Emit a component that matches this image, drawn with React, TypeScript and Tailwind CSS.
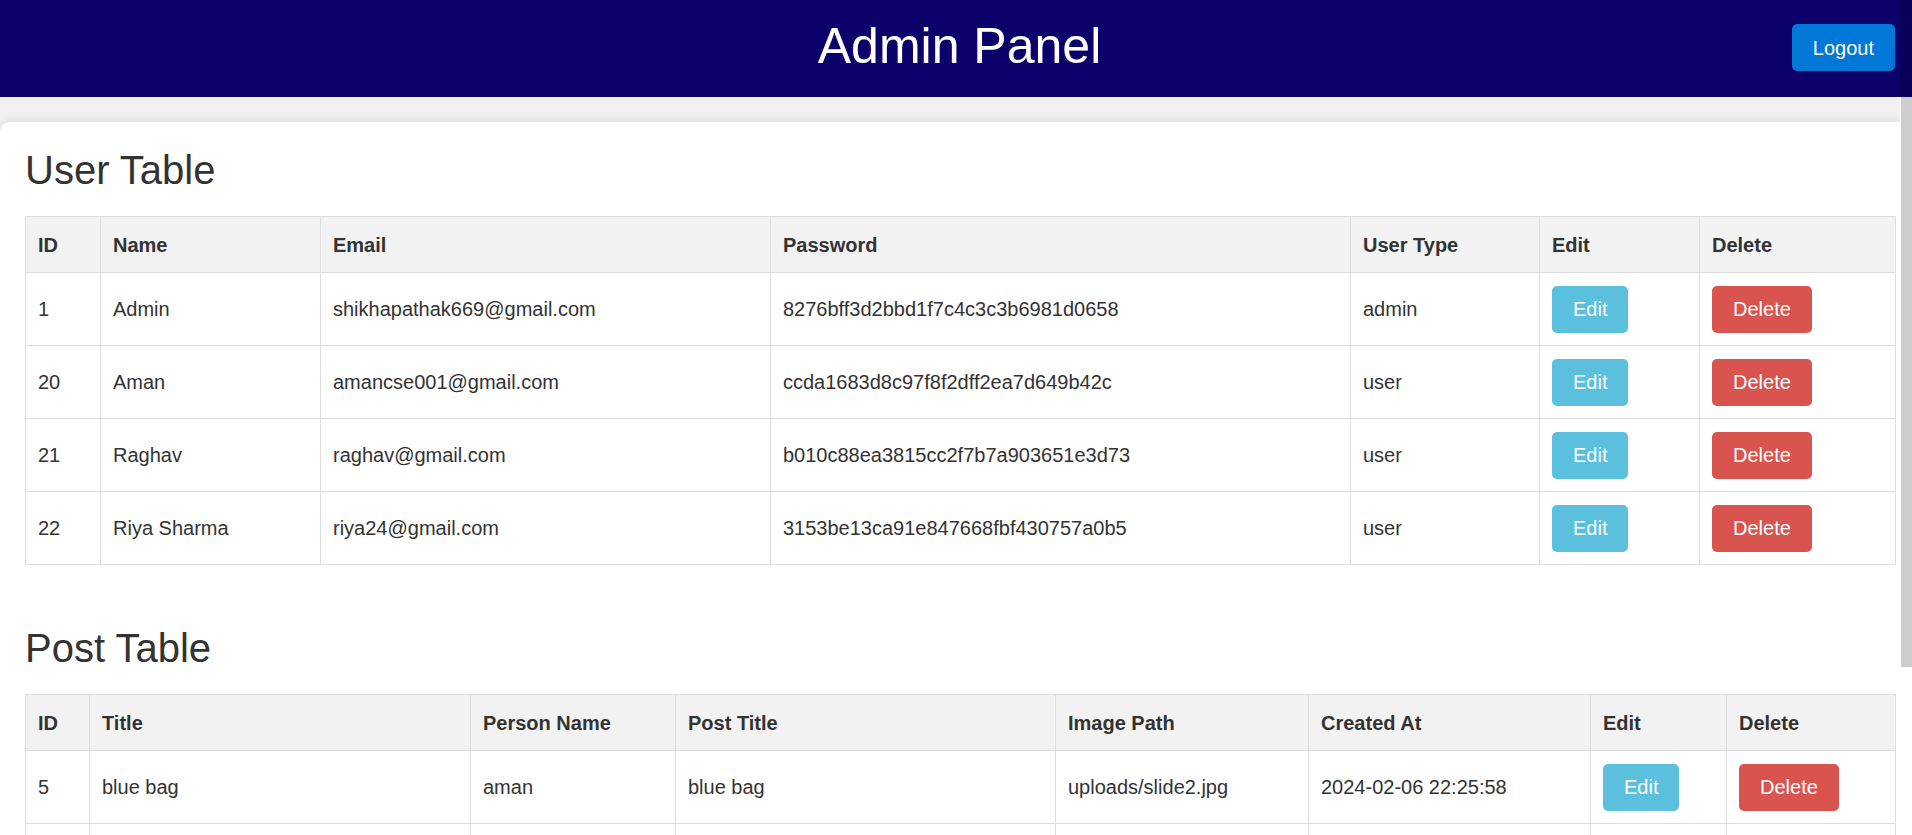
const users = [
  { id: 1, name: "Admin", email: "shikhapathak669@gmail.com", password: "8276bff3d2bbd1f7c4c3c3b6981d0658", type: "admin" },
  { id: 20, name: "Aman", email: "amancse001@gmail.com", password: "ccda1683d8c97f8f2dff2ea7d649b42c", type: "user" },
  { id: 21, name: "Raghav", email: "raghav@gmail.com", password: "b010c88ea3815cc2f7b7a903651e3d73", type: "user" },
  { id: 22, name: "Riya Sharma", email: "riya24@gmail.com", password: "3153be13ca91e847668fbf430757a0b5", type: "user" },
];

const posts = [
  { id: 5, title: "blue bag", person: "aman", postTitle: "blue bag", image: "uploads/slide2.jpg", created: "2024-02-06 22:25:58" },
];

const th = "h-[56px] border border-[#ddd] bg-[#f2f2f2] px-3 py-0 text-left font-bold";
const td = "h-[73px] border border-[#ddd] px-3 py-0";

function EditButton() {
  return (
    <button className="h-[47px] rounded-[5px] bg-[#5bc0de] px-[21px] text-[20px] text-white">
      Edit
    </button>
  );
}

function DeleteButton() {
  return (
    <button className="h-[47px] rounded-[5px] bg-[#d9534f] px-[21px] text-[20px] text-white">
      Delete
    </button>
  );
}

function Heading({ children, className = "" }: { children: string; className?: string }) {
  return (
    <h2 className={`h-[42px] text-[40px] leading-[42px] font-normal text-[#333] ${className}`}>
      {children}
    </h2>
  );
}

export default function App() {
  return (
    <div className="flex h-[835px] overflow-hidden bg-[#f1f1f1] font-['Liberation_Sans',Arial,sans-serif] text-[#333]">
      <div className="flex min-w-0 flex-1 flex-col">
        <header className="grid h-[97px] shrink-0 grid-cols-[1fr_auto_1fr] items-start bg-[#0c006b]">
          <div />
          <h1 className="pt-[21px] pl-[19px] text-[50px] leading-[50px] font-normal text-white">
            Admin Panel
          </h1>
          <div className="flex justify-end pt-[24px] pr-[5px]">
            <button className="h-[47px] rounded-[5px] bg-[#0078d7] px-[21px] text-[20px] text-white">
              Logout
            </button>
          </div>
        </header>

        <main className="mt-[25px] flex-1 rounded-tl-[10px] bg-white pt-[27px] pr-[5px] pl-[25px] shadow-[0_0_12px_rgba(0,0,0,0.12)]">
          <Heading className="mb-[25px]">User Table</Heading>
          <table className="w-[1870px] table-fixed border-collapse text-[20px]">
            <colgroup>
              <col className="w-[75px]" />
              <col className="w-[220px]" />
              <col className="w-[450px]" />
              <col className="w-[580px]" />
              <col className="w-[189px]" />
              <col className="w-[160px]" />
              <col className="w-[196px]" />
            </colgroup>
            <thead>
              <tr>
                <th className={th}>ID</th>
                <th className={th}>Name</th>
                <th className={th}>Email</th>
                <th className={th}>Password</th>
                <th className={th}>User Type</th>
                <th className={th}>Edit</th>
                <th className={th}>Delete</th>
              </tr>
            </thead>
            <tbody>
              {users.map((u) => (
                <tr key={u.id}>
                  <td className={td}>{u.id}</td>
                  <td className={td}>{u.name}</td>
                  <td className={td}>{u.email}</td>
                  <td className={td}>{u.password}</td>
                  <td className={td}>{u.type}</td>
                  <td className={td}>
                    <EditButton />
                  </td>
                  <td className={td}>
                    <DeleteButton />
                  </td>
                </tr>
              ))}
            </tbody>
          </table>

          <Heading className="mt-[62px] mb-[25px]">Post Table</Heading>
          <table className="w-[1870px] table-fixed border-collapse text-[20px]">
            <colgroup>
              <col className="w-[64px]" />
              <col className="w-[381px]" />
              <col className="w-[205px]" />
              <col className="w-[380px]" />
              <col className="w-[253px]" />
              <col className="w-[282px]" />
              <col className="w-[136px]" />
              <col className="w-[169px]" />
            </colgroup>
            <thead>
              <tr>
                <th className={th}>ID</th>
                <th className={th}>Title</th>
                <th className={th}>Person Name</th>
                <th className={th}>Post Title</th>
                <th className={th}>Image Path</th>
                <th className={th}>Created At</th>
                <th className={th}>Edit</th>
                <th className={th}>Delete</th>
              </tr>
            </thead>
            <tbody>
              {posts.map((p) => (
                <tr key={p.id}>
                  <td className={td}>{p.id}</td>
                  <td className={td}>{p.title}</td>
                  <td className={td}>{p.person}</td>
                  <td className={td}>{p.postTitle}</td>
                  <td className={td}>{p.image}</td>
                  <td className={td}>{p.created}</td>
                  <td className={td}>
                    <EditButton />
                  </td>
                  <td className={td}>
                    <DeleteButton />
                  </td>
                </tr>
              ))}
              {/* next row, below the fold */}
              <tr>
                {Array.from({ length: 8 }, (_, i) => (
                  <td key={i} className={td} />
                ))}
              </tr>
            </tbody>
          </table>
        </main>
      </div>

      {/* scrollbar */}
      <div className="flex w-[12px] shrink-0 flex-col bg-white">
        <div className="h-[97px] bg-[#09005a]" />
        <div className="ml-[1px] h-[570px] bg-[#cdcdcd]" />
      </div>
    </div>
  );
}
